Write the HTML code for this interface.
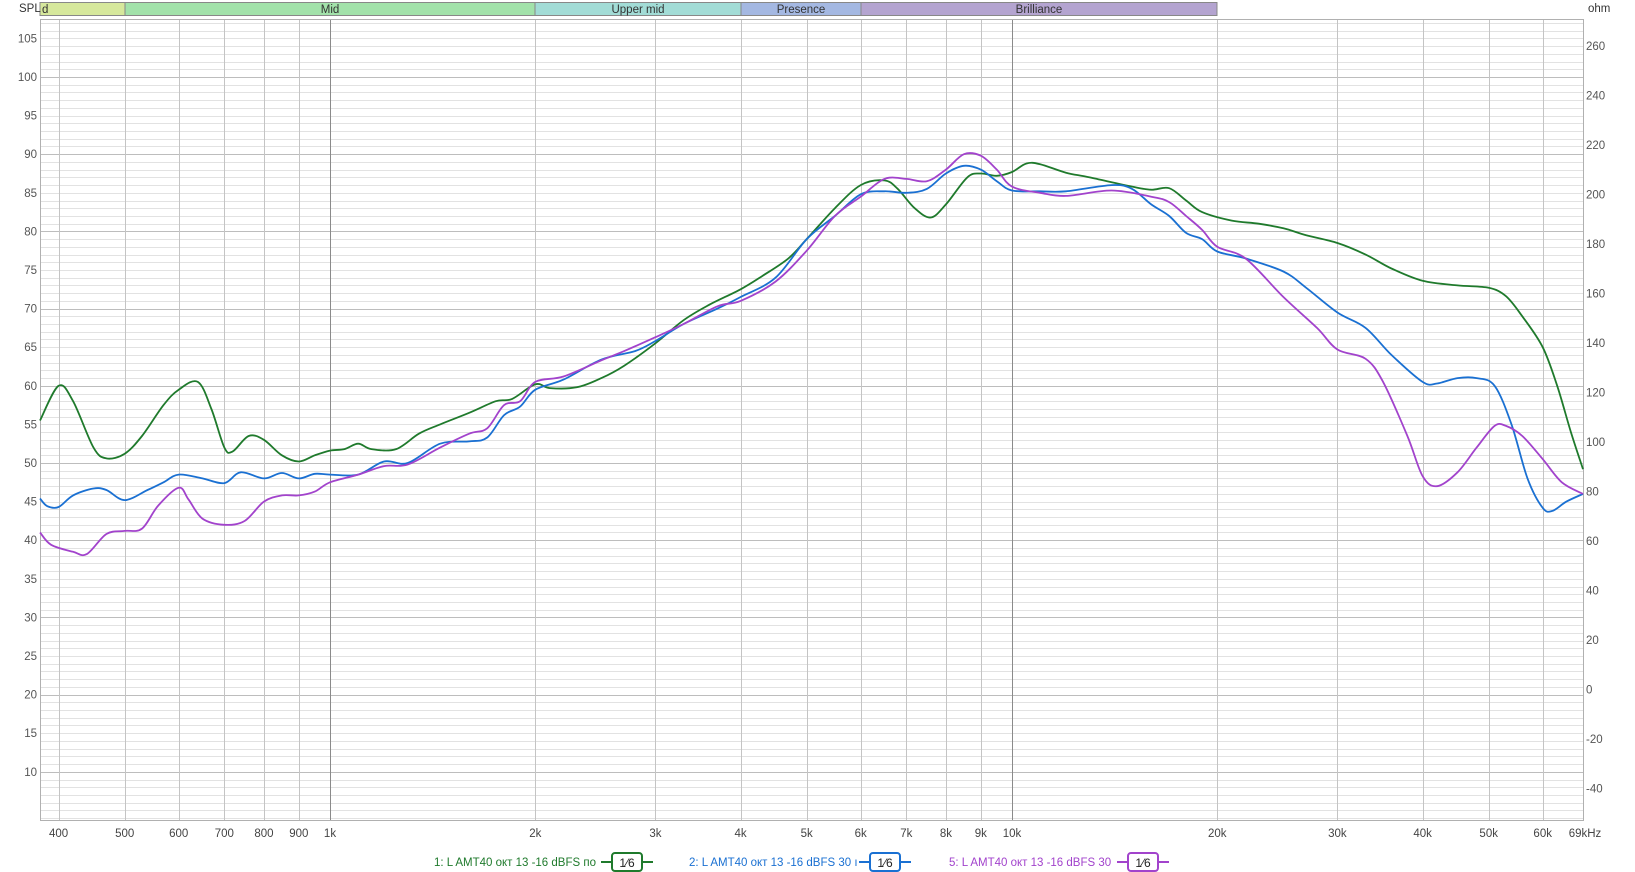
<!DOCTYPE html>
<html><head><meta charset="utf-8"><style>
html,body{margin:0;padding:0;background:#fff;width:1635px;height:872px;overflow:hidden}
svg{display:block;font-family:"Liberation Sans",sans-serif}
</style></head><body>
<svg id="s" width="1635" height="872" xmlns="http://www.w3.org/2000/svg"></svg>
<script>
var s=document.getElementById('s'),h='';
var L=40,R=1583,T=19,B=820;
function X(f){return 330+682*Math.log10(f/1000);}
function Y(d){return 77+(100-d)*7.72;}
var bands=[[L,125,'#d6e89c','d',46],[125,535,'#a2e2aa','Mid',330],[535,741,'#a2dcd6','Upper mid',638],[741,861,'#a4b8e2','Presence',801],[861,1217,'#b4a4d0','Brilliance',1039]];
bands.forEach(function(b){h+='<rect x="'+b[0]+'" y="2.5" width="'+(b[1]-b[0])+'" height="13" fill="'+b[2]+'" stroke="#888" stroke-width="1"/>';
h+='<text x="'+(b[0]==L?42:b[4])+'" y="13" font-size="11.5" fill="#333" text-anchor="'+(b[0]==L?'start':'middle')+'">'+b[3]+'</text>';});
for(var d=4;d<=107;d++){var y=Y(d);if(y<T||y>B)continue;var c=d%10==0?'#bdbdbd':'#e2e2e2';h+='<line x1="'+L+'" x2="'+R+'" y1="'+(Math.round(y)+.5)+'" y2="'+(Math.round(y)+.5)+'" stroke="'+c+'"/>';}
var vf=[400,500,600,700,800,900,1000,2000,3000,4000,5000,6000,7000,8000,9000,10000,20000,30000,40000,50000,60000];
vf.forEach(function(f){var x=Math.round(X(f))+.5;var c=(f==1000||f==10000)?'#8a8a8a':'#c4c4c4';h+='<line x1="'+x+'" x2="'+x+'" y1="'+T+'" y2="'+B+'" stroke="'+c+'"/>';});
h+='<rect x="'+(L+.5)+'" y="'+(T+.5)+'" width="'+(R-L)+'" height="'+(B-T)+'" fill="none" stroke="#b0b0b0"/>';
h+='<text x="19" y="12" font-size="11.5" fill="#333">SPL</text><text x="1588" y="12" font-size="11.5" fill="#333">ohm</text>';
for(var d=10;d<=105;d+=5)h+='<text x="37" y="'+(Y(d)+4)+'" font-size="11.5" fill="#555" text-anchor="end">'+d+'</text>';
for(var o=260;o>=-40;o-=20)h+='<text x="1586" y="'+(46+(260-o)/20*49.5+4)+'" font-size="11.5" fill="#555">'+o+'</text>';
var lab={400:'400',500:'500',600:'600',700:'700',800:'800',900:'900',1000:'1k',2000:'2k',3000:'3k',4000:'4k',5000:'5k',6000:'6k',7000:'7k',8000:'8k',9000:'9k',10000:'10k',20000:'20k',30000:'30k',40000:'40k',50000:'50k',60000:'60k'};
for(var k in lab)h+='<text x="'+X(+k)+'" y="837" font-size="11.5" fill="#444" text-anchor="middle">'+lab[k]+'</text>';
h+='<text x="1585" y="837" font-size="11.5" fill="#444" text-anchor="middle">69kHz</text>';
function curve(str,col){var p=str.split(',').map(function(t){var a=t.split(':');return [Math.min(R,Math.max(L,X(+a[0]))),Y(+a[1])];});
var d='M'+p[0][0].toFixed(1)+' '+p[0][1].toFixed(1);
for(var i=0;i<p.length-1;i++){var p0=p[Math.max(0,i-1)],p1=p[i],p2=p[i+1],p3=p[Math.min(p.length-1,i+2)];
var c1x=p1[0]+(p2[0]-p0[0])/6,c1y=p1[1]+(p2[1]-p0[1])/6,c2x=p2[0]-(p3[0]-p1[0])/6,c2y=p2[1]-(p3[1]-p1[1])/6;
d+='C'+c1x.toFixed(1)+' '+c1y.toFixed(1)+' '+c2x.toFixed(1)+' '+c2y.toFixed(1)+' '+p2[0].toFixed(1)+' '+p2[1].toFixed(1);}
h+='<path d="'+d+'" fill="none" stroke="'+col+'" stroke-width="1.8"/>';}
curve("374:55.5,400:60,420:58,450:52,470:50.6,500:51.2,530:53.5,570:57.5,600:59.5,640:60.5,670:57,700:52,720:51.5,760:53.5,800:53,850:51,900:50.2,950:51,1000:51.6,1050:51.8,1100:52.5,1150:51.8,1250:51.8,1350:53.8,1450:55,1600:56.5,1750:58,1850:58.3,2000:60.2,2100:59.7,2300:59.8,2500:61,2700:62.6,3000:65.5,3300:68.5,3600:70.5,4000:72.5,4300:74.2,4700:76.5,5000:79,5500:83,6000:86,6500:86.6,6800:85.5,7200:83,7600:81.8,8000:83.5,8600:87,9000:87.5,9500:87.2,10000:87.7,10500:88.8,11000:88.7,12000:87.6,13000:87,15000:85.8,16000:85.4,17000:85.6,18000:84,19000:82.5,21000:81.4,23000:81,25000:80.4,27000:79.5,30000:78.5,33000:77,36000:75.2,40000:73.6,45000:73,50000:72.7,53000:71.6,56000:69,60000:65,63000:60,66000:54,69000:49.2","#1f7a2c");
curve("374:45.4,385:44.4,400:44.3,420:45.8,450:46.7,470:46.5,500:45.2,540:46.5,570:47.5,600:48.5,650:48,700:47.4,740:48.8,800:48,850:48.7,900:48,950:48.6,1000:48.5,1100:48.5,1200:50.2,1300:50,1450:52.5,1600:52.8,1700:53.3,1800:56.2,1900:57.3,2000:59.5,2200:60.8,2500:63.4,2800:64.5,3000:65.8,3300:68,3700:70,4000:71.5,4500:74,5000:79,5500:82,6000:84.8,6500:85.2,7000:85,7500:85.5,8000:87.5,8500:88.5,9000:88,9500:86.5,10000:85.3,11000:85.2,12000:85.2,14000:86,15000:85.5,16000:83.5,17000:82,18000:79.8,19000:79,20000:77.4,22000:76.5,25000:74.8,27000:72.7,30000:69.5,33000:67.5,36000:64,40000:60.5,42000:60.3,45000:61,48000:61,51000:60,54000:55,57000:48,60000:44.2,62000:43.8,65000:45,69000:46","#1a70d2");
curve("374:41,390:39.4,420:38.5,440:38.2,470:40.8,500:41.2,530:41.5,560:44.5,600:46.8,620:45.3,650:42.8,700:42,750:42.5,800:45,850:45.8,900:45.8,950:46.3,1000:47.5,1100:48.5,1200:49.6,1300:49.8,1450:52,1600:53.8,1700:54.5,1800:57.5,1900:58,2000:60.5,2200:61.2,2500:63.3,2700:64.5,3000:66.3,3300:68,3700:70.3,4000:71,4500:73.5,5000:77.5,5500:82,6000:84.5,6500:86.8,7000:86.8,7500:86.5,8000:88,8500:90,9000:89.8,9500:88,10000:85.8,11000:85,12000:84.6,14000:85.3,16000:84.5,17000:83.8,18000:82,19000:80.2,20000:78,22000:76.5,25000:71.5,28000:67.5,30000:64.7,33000:63.5,35000:60.5,38000:53.5,40000:48.3,42000:47,45000:48.8,48000:52,51000:54.8,53000:54.8,56000:53.5,60000:50.5,64000:47.5,69000:46","#a243cc");
function leg(tx,txt,bx,col){h+='<text x="'+tx+'" y="866" font-size="11.5" fill="'+col+'">'+txt+'</text>';
h+='<line x1="'+(bx-11)+'" x2="'+(bx+41)+'" y1="862" y2="862" stroke="'+col+'" stroke-width="2"/>';
h+='<rect x="'+bx+'" y="853" width="30" height="18" rx="3" fill="#fff" stroke="'+col+'" stroke-width="2"/>';
h+='<text x="'+(bx+15)+'" y="867" font-size="12" fill="#222" text-anchor="middle">1⁄6</text>';}
leg(434,'1: L AMT40 окт 13 -16 dBFS по',612,'#1f7a2c');
leg(689,'2: L AMT40 окт 13 -16 dBFS 30 ı',870,'#1a70d2');
leg(949,'5: L AMT40 окт 13 -16 dBFS 30',1128,'#a243cc');
s.innerHTML=h;
</script>
</body></html>
